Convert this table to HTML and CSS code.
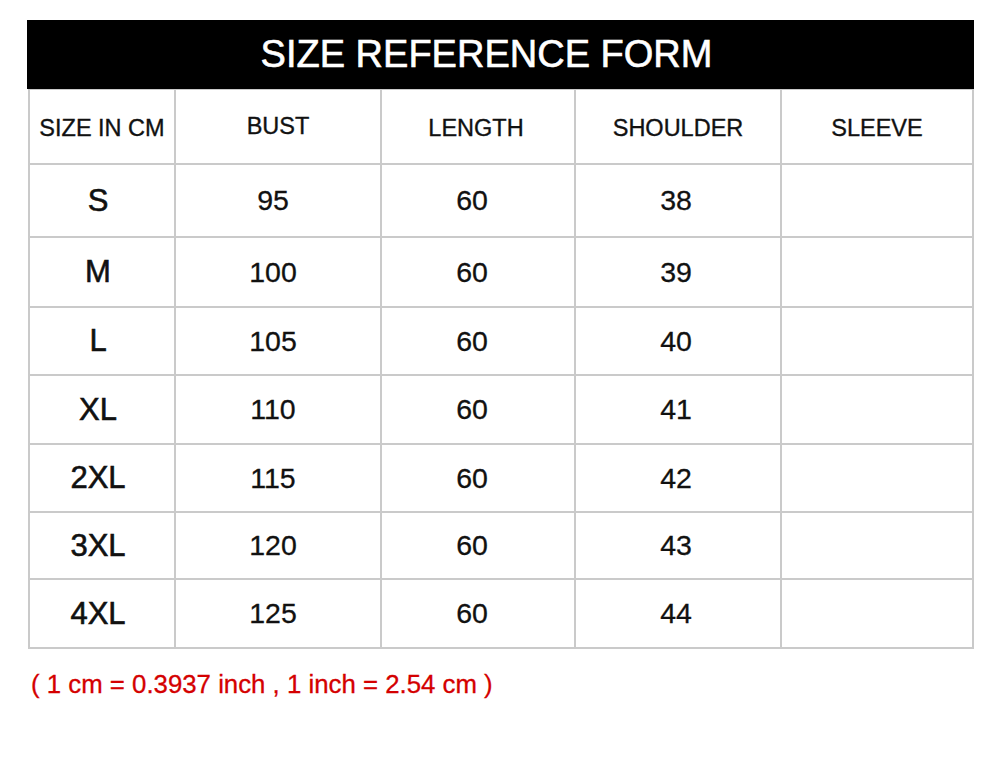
FILE: index.html
```html
<!DOCTYPE html>
<html>
<head>
<meta charset="utf-8">
<link rel="stylesheet" href="styles.css">
</head>
<body>
<div class="sheet">
  <div class="title">SIZE REFERENCE FORM</div>
  <div class="grid">
    <div class="cell head c1">SIZE IN CM</div>
    <div class="cell head c2 up">BUST</div>
    <div class="cell head c3">LENGTH</div>
    <div class="cell head c4">SHOULDER</div>
    <div class="cell head c5">SLEEVE</div>

    <div class="cell size c1">S</div>
    <div class="cell num c2">95</div>
    <div class="cell num c3">60</div>
    <div class="cell num c4">38</div>
    <div class="cell c5"></div>

    <div class="cell size c1">M</div>
    <div class="cell num c2">100</div>
    <div class="cell num c3">60</div>
    <div class="cell num c4">39</div>
    <div class="cell c5"></div>

    <div class="cell size c1">L</div>
    <div class="cell num c2">105</div>
    <div class="cell num c3">60</div>
    <div class="cell num c4">40</div>
    <div class="cell c5"></div>

    <div class="cell size c1">XL</div>
    <div class="cell num c2">110</div>
    <div class="cell num c3">60</div>
    <div class="cell num c4">41</div>
    <div class="cell c5"></div>

    <div class="cell size c1">2XL</div>
    <div class="cell num c2">115</div>
    <div class="cell num c3">60</div>
    <div class="cell num c4">42</div>
    <div class="cell c5"></div>

    <div class="cell size c1">3XL</div>
    <div class="cell num c2">120</div>
    <div class="cell num c3">60</div>
    <div class="cell num c4">43</div>
    <div class="cell c5"></div>

    <div class="cell size c1">4XL</div>
    <div class="cell num c2">125</div>
    <div class="cell num c3">60</div>
    <div class="cell num c4">44</div>
    <div class="cell c5"></div>
  </div>
  <div class="note">( 1 cm = 0.3937 inch , 1 inch = 2.54 cm )</div>
</div>
</body>
</html>
```

FILE: styles.css
```css
html, body {
  margin: 0;
  padding: 0;
  background: #ffffff;
}

body {
  font-family: "Liberation Sans", Arial, sans-serif;
  color: #111111;
}

.sheet {
  padding-top: 20px;
  margin-left: 27px;
  width: 947px;
}

.title {
  height: 69px;
  background: #000000;
  color: #ffffff;
  font-size: 38px;
  -webkit-text-stroke: 0.6px #ffffff;
  display: flex;
  align-items: center;
  justify-content: center;
  padding-right: 28px;
  box-sizing: border-box;
}

.grid {
  margin-left: 1px;
  width: 946px;
  box-sizing: border-box;
  display: grid;
  grid-template-columns: 146px 206px 194px 206px 192px;
  grid-template-rows: 75px 73px 70px 68px 69px 68px 67px 69px;
  border-left: 2px solid #cacaca;
  border-top: 1px solid #cacaca;
}

.cell {
  border-right: 2px solid #cacaca;
  border-bottom: 2px solid #cacaca;
  display: flex;
  align-items: center;
  justify-content: center;
  box-sizing: border-box;
}

.head {
  font-size: 23.5px;
  -webkit-text-stroke: 0.35px #111111;
  padding-top: 3px;
}

.head.up {
  padding-top: 0;
}

.num {
  font-size: 28.5px;
  -webkit-text-stroke: 0.3px #111111;
}

.size {
  font-size: 31px;
  -webkit-text-stroke: 0.6px #111111;
  padding-right: 8px;
}

.num.c2 {
  padding-right: 10px;
}

.num.c3 {
  padding-right: 12px;
}

.head.c3 {
  padding-right: 4px;
}

.num.c4 {
  padding-right: 4px;
}

.note {
  margin-top: 20px;
  margin-left: 4px;
  color: #d40000;
  font-size: 25.8px;
  -webkit-text-stroke: 0.3px #d40000;
  line-height: 30px;
}
```
